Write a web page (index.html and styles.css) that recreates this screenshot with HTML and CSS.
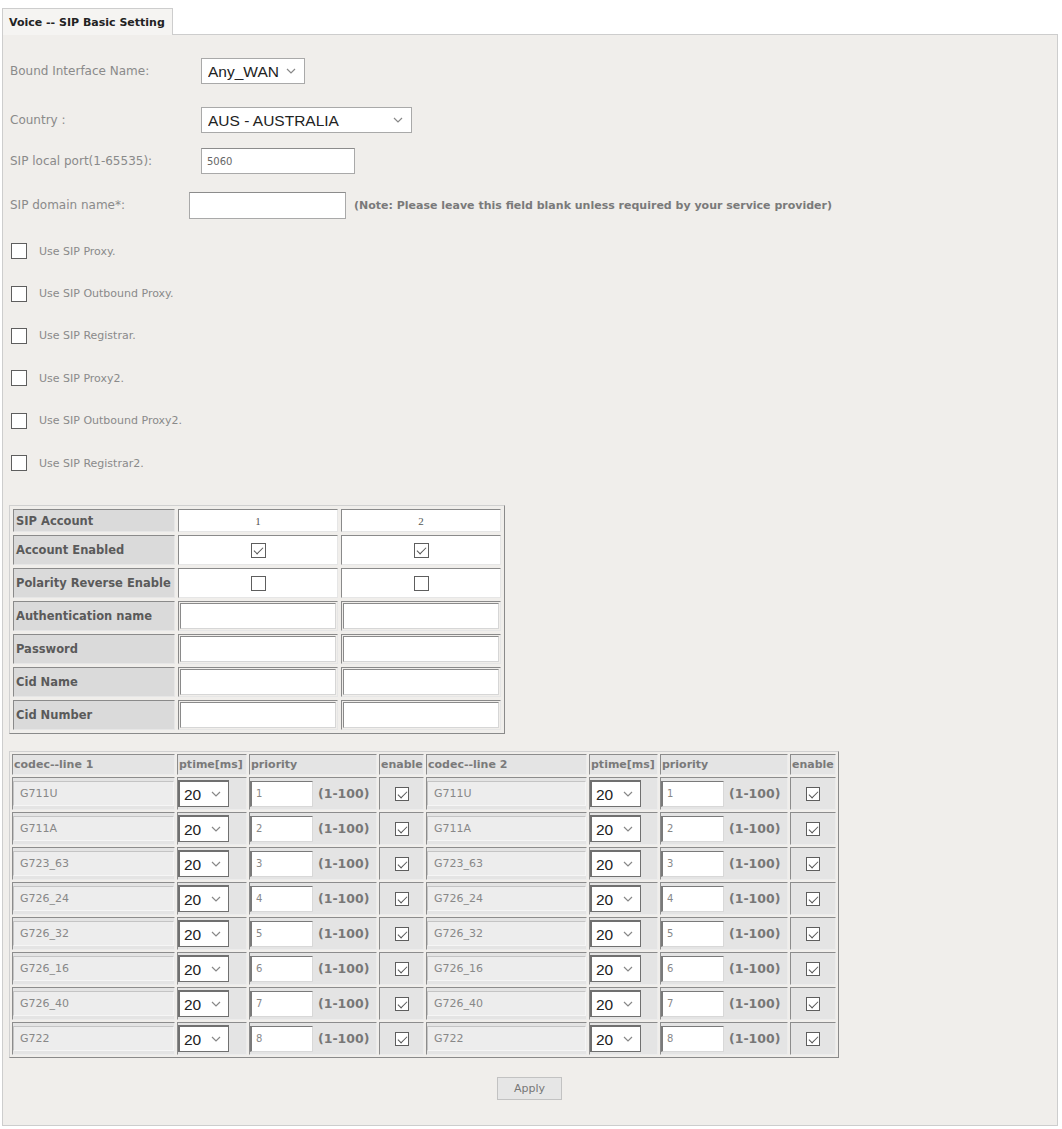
FILE: index.html
```html
<!DOCTYPE html>
<html lang="en">
<head>
    <meta charset="UTF-8">
    <meta name="viewport" content="width=device-width, initial-scale=1.0">
    <title>Voice -- SIP Basic Setting</title>
    <link rel="stylesheet" href="styles.css">
</head>
<body>

<div class="tab-bar">
    <div class="tab">Voice -- SIP Basic Setting</div>
    <div class="tab-fill"></div>
</div>

<div class="panel">
    <div class="field-row">
        <label class="field-label" for="bound_if">Bound Interface Name:</label>
        <span class="select-wrap sel-iface">
            <select id="bound_if"><option>Any_WAN</option></select>
            <svg class="chevron" width="10" height="6" viewBox="0 0 10 6"><path d="M1 1l4 4 4-4"/></svg>
        </span>
    </div>

    <div class="field-row row-country">
        <label class="field-label" for="country">Country :</label>
        <span class="select-wrap sel-country">
            <select id="country"><option>AUS - AUSTRALIA</option></select>
            <svg class="chevron" width="10" height="6" viewBox="0 0 10 6"><path d="M1 1l4 4 4-4"/></svg>
        </span>
    </div>

    <div class="field-row">
        <label class="field-label" for="local_port">SIP local port(1-65535):</label>
        <input type="text" id="local_port" class="text-input port-input" value="5060">
    </div>

    <div class="field-row">
        <label class="field-label label-short" for="domain">SIP domain name*:</label>
        <input type="text" id="domain" class="text-input domain-input">
        <span class="note">(Note: Please leave this field blank unless required by your service provider)</span>
    </div>

    <div class="check-list">
        <label class="check-row"><input type="checkbox" class="box"> Use SIP Proxy.</label>
        <label class="check-row"><input type="checkbox" class="box"> Use SIP Outbound Proxy.</label>
        <label class="check-row"><input type="checkbox" class="box"> Use SIP Registrar.</label>
        <label class="check-row"><input type="checkbox" class="box"> Use SIP Proxy2.</label>
        <label class="check-row"><input type="checkbox" class="box"> Use SIP Outbound Proxy2.</label>
        <label class="check-row"><input type="checkbox" class="box"> Use SIP Registrar2.</label>
    </div>

    <table class="acct-table">
        <tr class="row-head">
            <th>SIP Account</th>
            <td class="acct-num">1</td>
            <td class="acct-num">2</td>
        </tr>
        <tr class="row-check">
            <th>Account Enabled</th>
            <td class="acct-check"><input type="checkbox" class="box" checked></td>
            <td class="acct-check"><input type="checkbox" class="box" checked></td>
        </tr>
        <tr class="row-check">
            <th>Polarity Reverse Enable</th>
            <td class="acct-check"><input type="checkbox" class="box"></td>
            <td class="acct-check"><input type="checkbox" class="box"></td>
        </tr>
        <tr class="row-input">
            <th>Authentication name</th>
            <td class="acct-field"><input type="text" class="acct-input"></td>
            <td class="acct-field"><input type="text" class="acct-input"></td>
        </tr>
        <tr class="row-input">
            <th>Password</th>
            <td class="acct-field"><input type="password" class="acct-input"></td>
            <td class="acct-field"><input type="password" class="acct-input"></td>
        </tr>
        <tr class="row-input">
            <th>Cid Name</th>
            <td class="acct-field"><input type="text" class="acct-input"></td>
            <td class="acct-field"><input type="text" class="acct-input"></td>
        </tr>
        <tr class="row-input">
            <th>Cid Number</th>
            <td class="acct-field"><input type="text" class="acct-input"></td>
            <td class="acct-field"><input type="text" class="acct-input"></td>
        </tr>
    </table>

    <table class="codec-table">
        <colgroup>
            <col class="c-name"><col class="c-ptime"><col class="c-prio"><col class="c-en">
            <col class="c-name2"><col class="c-ptime2"><col class="c-prio"><col class="c-en2">
        </colgroup>
        <thead>
            <tr>
                <th>codec--line 1</th>
                <th>ptime[ms]</th>
                <th>priority</th>
                <th>enable</th>
                <th>codec--line 2</th>
                <th>ptime[ms]</th>
                <th>priority</th>
                <th>enable</th>
            </tr>
        </thead>
        <tbody id="codec_rows"></tbody>
    </table>

    <div class="actions">
        <button class="apply-btn">Apply</button>
    </div>
</div>

<script>
    const codecs = ['G711U', 'G711A', 'G723_63', 'G726_24', 'G726_32', 'G726_16', 'G726_40', 'G722'];

    function lineCells(name, prio) {
        return `
            <td class="codec-name"><input type="text" class="codec-input" value="${name}" readonly></td>
            <td class="codec-ptime">
                <span class="select-wrap sel-ptime">
                    <select><option>20</option><option>30</option></select>
                    <svg class="chevron" width="10" height="6" viewBox="0 0 10 6"><path d="M1 1l4 4 4-4"/></svg>
                </span>
            </td>
            <td class="codec-prio"><input type="text" class="prio-input" value="${prio}"><span class="range">(1-100)</span></td>
            <td class="codec-en"><input type="checkbox" class="box" checked></td>
        `;
    }

    const rowsHTML = codecs.map((name, i) => `<tr>${lineCells(name, i + 1)}${lineCells(name, i + 1)}</tr>`).join('');
    document.getElementById('codec_rows').innerHTML = rowsHTML;
</script>

</body>
</html>
```

FILE: styles.css
```css
body {
    margin: 8px 4px 3px 2px;
    font-family: "DejaVu Sans", Verdana, sans-serif;
    font-size: 12px;
    color: #8a8a8a;
    background-color: #fff;
}

/* tab header */
.tab-bar {
    display: flex;
    height: 27px;
}
.tab {
    width: 163px;
    padding-left: 6px;
    line-height: 27px;
    border: 1px solid #cdcdcd;
    border-bottom: none;
    background-color: #f5f4f2;
    color: #222;
    font-size: 11px;
    font-weight: bold;
    white-space: nowrap;
}
.tab-fill {
    flex: 1;
    border-bottom: 1px solid #cdcdcd;
}

.panel {
    border: 1px solid #cdcdcd;
    border-top: none;
    background-color: #f0eeeb;
    padding: 23px 8px 25px 7px;
}

/* top form rows */
.field-row {
    display: flex;
    align-items: center;
    height: 26px;
    margin-bottom: 15px;
}
.field-row:first-child {
    margin-bottom: 23px;
}
.field-row:nth-child(3) {
    margin-bottom: 18px;
}
.field-label {
    width: 191px;
    flex: none;
}
.label-short {
    width: 179px;
}
.select-wrap {
    position: relative;
    display: inline-block;
}
.select-wrap select {
    appearance: none;
    -webkit-appearance: none;
    display: block;
    height: 26px;
    border: 1px solid #a9a9a9;
    background-color: #fff;
    font-family: "Liberation Sans", Arial, sans-serif;
    font-size: 15.5px;
    color: #222;
    padding: 0 0 0 6px;
    border-radius: 0;
}
.chevron {
    position: absolute;
    top: 10px;
    right: 9px;
    fill: none;
    stroke: #888;
    stroke-width: 1.2;
    pointer-events: none;
}
.sel-iface select {
    width: 104px;
}
.sel-country select {
    width: 211px;
}
.text-input {
    box-sizing: border-box;
    height: 26px;
    border: 1px solid #a9a9a9;
    border-top-color: #8c8c8c;
    background-color: #fff;
    font-family: "DejaVu Sans", Verdana, sans-serif;
    font-size: 10px;
    color: #666;
    padding: 0 5px;
}
.port-input {
    width: 154px;
}
.domain-input {
    width: 157px;
    height: 27px;
}
.note {
    margin-left: 8px;
    font-weight: bold;
    font-size: 11px;
    color: #7a7a7a;
    white-space: nowrap;
}

/* checkboxes */
.box {
    appearance: none;
    -webkit-appearance: none;
    position: relative;
    width: 15px;
    height: 15px;
    margin: 0;
    border: 1px solid #5e5e5e;
    background-color: #fff;
    vertical-align: middle;
}
.box:checked::after {
    content: "";
    position: absolute;
    left: 4px;
    top: 1px;
    width: 4px;
    height: 8px;
    border: solid #555;
    border-width: 0 1.5px 1.5px 0;
    transform: rotate(45deg);
}
.check-list {
    margin-top: -3px;
}
.check-row {
    display: flex;
    align-items: center;
    height: 42.4px;
    gap: 12px;
    padding-left: 1px;
    font-size: 11px;
    color: #8a8a8a;
}
.check-row .box {
    width: 16px;
    height: 16px;
}

/* SIP account table */
.acct-table {
    margin-top: 21px;
    border: 1px solid;
    border-color: #d0d0d0 #8a8a8a #8a8a8a #d0d0d0;
    border-spacing: 3px;
    margin-left: -1px;
}
.acct-table th,
.acct-table td {
    border: 1px solid;
    border-color: #8a8a8a #e6e6e6 #e6e6e6 #8a8a8a;
    padding: 0;
}
.acct-table th {
    width: 158px;
    background-color: #dadada;
    text-align: left;
    padding-left: 2px;
    color: #5a5a5a;
    font-size: 11.5px;
    white-space: nowrap;
}
.acct-table td {
    width: 156px;
    background-color: #fff;
    text-align: center;
}
.row-head th,
.row-head td {
    height: 21px;
}
.row-check th,
.row-check td {
    height: 28px;
}
.row-input th,
.row-input td {
    height: 26px;
}
.acct-table .acct-field {
    background-color: #f0eeeb;
    padding: 1px;
}
.acct-num {
    font-family: "Liberation Serif", serif;
    font-size: 11px;
    color: #555;
}
.acct-input {
    box-sizing: border-box;
    display: block;
    width: 100%;
    height: 26px;
    border: 1px solid;
    border-color: #8a8a8a #d6d6d6 #d6d6d6 #8a8a8a;
    background-color: #fff;
}

/* codec table */
.codec-table {
    margin-top: 17px;
    table-layout: fixed;
    width: 830px;
    border: 1px solid;
    border-color: #d0d0d0 #8a8a8a #8a8a8a #d0d0d0;
    border-spacing: 2px;
    margin-left: -1px;
}
.c-name { width: 163px; }
.c-ptime { width: 70px; }
.c-prio { width: 128px; }
.c-en { width: 45px; }
.c-name2 { width: 161px; }
.c-ptime2 { width: 69px; }
.c-en2 { width: 46px; }
.codec-table th,
.codec-table td {
    border: 1px solid;
    border-color: #8c8c8c #ececec #ececec #8c8c8c;
    background-color: #e4e4e4;
    padding: 0;
}
.codec-table th {
    height: 19px;
    text-align: left;
    color: #7a7a7a;
    font-size: 11px;
    font-weight: bold;
    padding-left: 1px;
    white-space: nowrap;
    overflow: hidden;
}
.codec-table td {
    height: 31px;
}
.codec-name {
    padding: 0 2px 0 4px;
}
.codec-input {
    box-sizing: border-box;
    display: block;
    width: 100%;
    height: 25px;
    border: 1px solid;
    border-color: #c4c4c4 #f6f6f6 #f6f6f6 #c4c4c4;
    background-color: #ededed;
    font-family: "DejaVu Sans", Verdana, sans-serif;
    font-size: 11px;
    color: #888;
    padding: 0 6px;
}
.codec-ptime {
    padding-left: 2px;
}
.sel-ptime select {
    width: 51px;
    height: 27px;
    border: 1px solid #707070;
    border-left-width: 2px;
    border-top-width: 2px;
    padding-left: 4px;
}
.codec-ptime .chevron {
    top: 11px;
    right: 8px;
}
.codec-prio {
    white-space: nowrap;
    padding-left: 3px;
}
.prio-input {
    box-sizing: border-box;
    width: 63px;
    height: 26px;
    border: 1px solid;
    border-color: #7a7a7a #d8d8d8 #d8d8d8 #7a7a7a;
    border-left-width: 2px;
    background-color: #fff;
    font-family: "DejaVu Sans", Verdana, sans-serif;
    font-size: 10px;
    color: #888;
    padding: 0 4px;
    vertical-align: middle;
}
.range {
    margin-left: 5px;
    font-family: "DejaVu Sans", Verdana, sans-serif;
    font-size: 12.5px;
    font-weight: bold;
    color: #777;
    vertical-align: middle;
}
.codec-en {
    text-align: center;
}
.codec-en .box {
    width: 14px;
    height: 14px;
}

/* apply */
.actions {
    display: flex;
    justify-content: center;
    margin-top: 19px;
}
.apply-btn {
    width: 65px;
    height: 23px;
    border: 1px solid #c2c2c2;
    background-color: #e6e6e6;
    font-family: "DejaVu Sans", Verdana, sans-serif;
    font-size: 11px;
    color: #777;
    cursor: pointer;
}
```
